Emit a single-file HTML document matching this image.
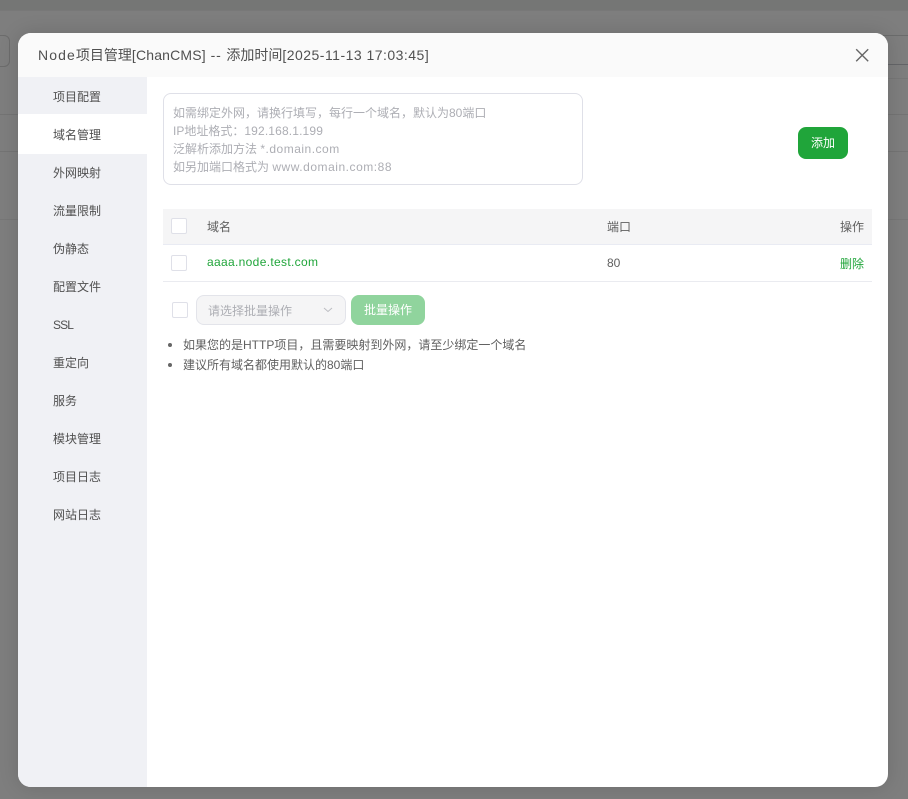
<!DOCTYPE html>
<html lang="zh">
<head>
<meta charset="utf-8">
<style>
*{box-sizing:border-box;margin:0;padding:0}
html,body{width:908px;height:799px;overflow:hidden}
body{position:relative;background:#7e7e7e;font-family:"Liberation Sans","Noto Sans CJK SC",sans-serif;font-size:12px;color:#5f5f5f}
.a{position:absolute}
.nw{white-space:nowrap;line-height:18px}
.modal{left:18px;top:33px;width:870px;height:754px;background:#fff;border-radius:13px;overflow:hidden}
.shadow{left:18px;top:33px;width:870px;height:754px;border-radius:13px;box-shadow:0 0 20px rgba(0,0,0,.14)}
.head{left:0;top:0;width:870px;height:44px;background:#fafafa;color:#505050;font-size:14px;line-height:44px;padding-left:20px;white-space:nowrap}
.side{left:0;top:44px;width:129px;height:710px;background:#f0f1f5}
.item{left:0;width:129px;height:38px;line-height:38px;padding-left:35px;color:#505050;font-size:12px}
.cb{width:16px;height:16px;border:1px solid #dfe0e8;border-radius:2px;background:#fff}
</style>
</head>
<body>
<div class="a" style="left:0;top:0;width:908px;height:10px;background:#757675"></div>
<div class="a" style="left:0;top:10px;width:908px;height:1px;background:#787878"></div>
<div class="a" style="left:-20px;top:35px;width:30px;height:32px;border:1px solid #6c6c6c;border-radius:6px"></div>
<div class="a" style="left:880px;top:35px;width:28px;height:1px;background:#6b6c6c"></div>
<div class="a" style="left:880px;top:64px;width:28px;height:1px;background:#646568"></div>
<div class="a" style="left:880px;top:78px;width:28px;height:1px;background:#777"></div>
<div class="a" style="left:0;top:114px;width:908px;height:1px;background:#747474"></div>
<div class="a" style="left:0;top:151px;width:908px;height:1px;background:#747474"></div>
<div class="a" style="left:0;top:219px;width:908px;height:1px;background:#777"></div>
<div class="a shadow"></div>

<div class="a modal">
  <div class="a head"><span style="letter-spacing:1.1px">Node</span>项目管理<span style="letter-spacing:.18px">[ChanCMS]</span><span style="letter-spacing:.85px"> -- </span>添加时间<span style="letter-spacing:.48px">[2025-11-13 17:03:45]</span></div>
  <svg class="a" style="left:837px;top:15px" width="15" height="15" viewBox="0 0 15 15"><path d="M1.2 1.2L13.2 13.2M13.2 1.2L1.2 13.2" stroke="#666" stroke-width="1.4" fill="none"/></svg>

  <div class="a side"></div>
  <div class="a" style="left:0;top:81px;width:129px;height:40px;background:#fff"></div>
  <div class="a item" style="top:45px">项目配置</div>
  <div class="a item" style="top:83px">域名管理</div>
  <div class="a item" style="top:121px">外网映射</div>
  <div class="a item" style="top:159px">流量限制</div>
  <div class="a item" style="top:197px">伪静态</div>
  <div class="a item" style="top:235px">配置文件</div>
  <div class="a item" style="top:273px;letter-spacing:-.9px">SSL</div>
  <div class="a item" style="top:311px">重定向</div>
  <div class="a item" style="top:349px">服务</div>
  <div class="a item" style="top:387px">模块管理</div>
  <div class="a item" style="top:425px">项目日志</div>
  <div class="a item" style="top:463px">网站日志</div>

  <div class="a" style="left:145px;top:60px;width:420px;height:92px;border:1px solid #dfe0e8;border-radius:8px"></div>
  <div class="a nw" style="left:155px;top:71px;color:#adaeb4;font-size:12px">如需绑定外网，请换行填写，每行一个域名，默认为80端口<br>IP地址格式：<span style="letter-spacing:.15px">192.168.1.199</span><br>泛解析添加方法 <span style="letter-spacing:.5px">*.domain.com</span><br>如另加端口格式为 <span style="letter-spacing:.53px">www.domain.com:88</span></div>
  <div class="a" style="left:780px;top:94px;width:50px;height:32px;background:#20a53a;border-radius:8px;color:#fff;line-height:33px;text-align:center;font-size:12px">添加</div>

  <div class="a" style="left:145px;top:176px;width:709px;height:36px;background:#f5f5f6;border-bottom:1px solid #e9ebf3"></div>
  <div class="a cb" style="left:153px;top:185px"></div>
  <div class="a nw" style="left:189px;top:185px">域名</div>
  <div class="a nw" style="left:589px;top:185px">端口</div>
  <div class="a nw" style="left:822px;top:185px">操作</div>

  <div class="a" style="left:145px;top:248px;width:709px;height:1px;background:#eaebf0"></div>
  <div class="a cb" style="left:153px;top:222px"></div>
  <div class="a nw" style="left:189px;top:220px;color:#20a53a;letter-spacing:.33px">aaaa.node.test.com</div>
  <div class="a nw" style="left:589px;top:221px">80</div>
  <div class="a nw" style="left:822px;top:222px;color:#20a53a">删除</div>

  <div class="a cb" style="left:154px;top:269px"></div>
  <div class="a" style="left:178px;top:262px;width:150px;height:30px;background:#f5f5f6;border:1px solid #e3e4ea;border-radius:8px"></div>
  <div class="a nw" style="left:190px;top:269px;color:#adaeb4">请选择批量操作</div>
  <svg class="a" style="left:304px;top:273px" width="12" height="8" viewBox="0 0 12 8"><path d="M2 2L6 5.5L10 2" stroke="#bcbdc2" stroke-width="1" fill="none"/></svg>
  <div class="a" style="left:333px;top:262px;width:74px;height:30px;background:#90d49d;border-radius:8px;color:#fff;line-height:31px;text-align:center">批量操作</div>

  <div class="a" style="left:150px;top:310px;width:4px;height:4px;border-radius:50%;background:#666"></div>
  <div class="a nw" style="left:165px;top:303px">如果您的是HTTP项目，且需要映射到外网，请至少绑定一个域名</div>
  <div class="a" style="left:150px;top:330px;width:4px;height:4px;border-radius:50%;background:#666"></div>
  <div class="a nw" style="left:165px;top:323px">建议所有域名都使用默认的80端口</div>
</div>
</body>
</html>
